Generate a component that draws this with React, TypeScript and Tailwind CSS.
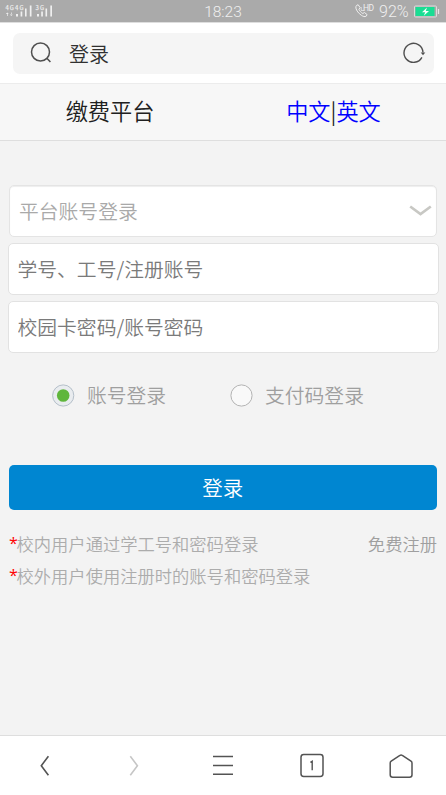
import React, { useState } from 'react';

type LoginMode = 'account' | 'paycode';

const modes: { id: LoginMode; label: string; width: string }[] = [
  { id: 'account', label: '账号登录', width: 'w-[178px]' },
  { id: 'paycode', label: '支付码登录', width: 'w-[160px]' },
];

const hints = ['校内用户通过学工号和密码登录', '校外用户使用注册时的账号和密码登录'];

function StatusBar() {
  return (
    <div className="grid h-[22px] shrink-0 grid-cols-[1fr_auto_1fr] items-center bg-[#aaaaaa] text-[#efefef]">
      <svg className="h-[22px] w-[60px]" viewBox="0 0 60 22" fill="currentColor">
        <text x="5.5" y="10" fontSize="6" fontWeight="700" textLength="18">4G4G</text>
        <text x="35.5" y="10" fontSize="6" fontWeight="700" textLength="8.5">3G</text>
        <path d="M7.3 12.5l1.4 1.6H5.9zM7 13.5h.7V16H7zM11.3 16l1.4-1.6H9.9zM11 12.5h.7V15H11z" />
        <path d="M16 14h2v2.5h-2zM20.6 11.5h1.7v5h-1.7zM25 8.5h1.6v8H25zM29.8 5.5h1.7v11h-1.7z" />
        <path d="M37 14h2v2.5h-2zM41.2 11.5h1.7v5h-1.7zM45.5 8.5h1.6v8h-1.6zM50.3 5.5H52v11h-1.7z" />
      </svg>
      <span className="pt-[2px] font-['Roboto',sans-serif] text-[15.5px] leading-5 font-light">18:23</span>
      <div className="flex items-center justify-end pr-[6px]">
        <svg className="h-[22px] w-[25px]" viewBox="0 0 25 22" fill="none" stroke="currentColor">
          <path
            d="M2.4 5.6l1.7-.9 2.1 3-1.3 1.600c.9 1.900 2.100 3.200 3.900 4.200l1.700-1 2.600 2.100-.9 1.600c-1.500.8-3.100.3-4.800-.9C4.500 13.300 2.500 10.700 1.900 8.100 1.800 7 1.900 6.100 2.400 5.600z"
            strokeWidth="1"
          />
          <path d="M7.200 7v3.500h3" strokeWidth=".7" />
          <text x="9" y="10.800" fontSize="8.500" fontFamily="Roboto, sans-serif" fontWeight="400" fill="currentColor" stroke="none" textLength="11">HD</text>
        </svg>
        <span className="w-[32px] pt-[2px] font-['Roboto',sans-serif] text-[16px] leading-5 font-light">92%</span>
        <svg className="ml-[3px] h-[13px] w-[26px]" viewBox="0 0 26 13">
          <rect x=".5" y="1" width="22" height="11" rx="1" fill="#aaaaaa" stroke="#dcdcdc" />
          <rect x="1.500" y="2" width="19" height="9" fill="#19dd93" />
          <path d="M13 2.500L8 7.200h3.200L9.800 10.700l5.200-4.600h-3.200z" fill="#f5fffb" />
          <path d="M24.500 4v5" stroke="#e5e5e5" strokeWidth="1.200" />
        </svg>
      </div>
    </div>
  );
}

function SearchBar() {
  return (
    <div className="h-[61px] shrink-0 border-t border-[#dedede] bg-white px-[12.5px] pt-[9.5px]">
      <div className="flex h-[41.5px] items-center rounded-[7px] bg-[#f5f5f5] pr-[8px] pl-[17px] text-[#4f4f4f]">
        <svg className="h-6 w-6" viewBox="0 0 24 24" fill="none" stroke="currentColor" strokeWidth="1.500">
          <circle cx="10.500" cy="11" r="9" />
          <path d="M16.900 17.300l3.500 3.700" />
        </svg>
        <span className="ml-[15.5px] grow pt-[2px] text-[20px] leading-none text-[#303030]">登录</span>
        <svg className="h-6 w-6" viewBox="0 0 24 24" fill="none" stroke="currentColor" strokeWidth="1.400">
          <path d="M19.900 16.300A9.500 9.500 0 1 1 21 11.500" />
          <path d="M18.700 11.500h4.600L21 14.300z" fill="currentColor" stroke="none" />
        </svg>
      </div>
    </div>
  );
}

function TitleBar() {
  return (
    <div className="flex h-[58px] shrink-0 items-center border-t border-b border-t-[#ececec] border-b-[#dedede] bg-[#f7f7f7] pb-[4px] text-[22.2px] leading-none font-light text-[#202020]">
      <h1 className="w-[220px] text-center font-light">缴费平台</h1>
      <div className="w-[226px] pl-px text-center">
        <a className="text-[#0000ff]">中文</a>|<a className="text-[#0000ff]">英文</a>
      </div>
    </div>
  );
}

function BottomNav() {
  const icon = 'h-[30px] w-[30px]';
  return (
    <nav className="grid h-[60px] shrink-0 grid-cols-5 place-items-center border-t border-[#dedede] bg-white text-[#535353]">
      <svg className={icon} viewBox="0 0 30 30" fill="none" stroke="currentColor" strokeWidth="1.600">
        <path d="M18.400 5.200L11.300 14.700l7.100 9.500" />
      </svg>
      <svg className={`${icon} text-[#c6c6c6]`} viewBox="0 0 30 30" fill="none" stroke="currentColor" strokeWidth="1.600">
        <path d="M11.300 5.200L18.400 14.700l-7.100 9.500" />
      </svg>
      <svg className={icon} viewBox="0 0 30 30" fill="none" stroke="currentColor" strokeWidth="1.600">
        <path d="M5 5.500h20M5 14.500h20M5 23.300h20" />
      </svg>
      <svg className={icon} viewBox="0 0 30 30" fill="none" stroke="currentColor" strokeWidth="1.500">
        <rect x="4" y="3.500" width="22" height="22" rx="2.700" />
        <path d="M13.400 11.300l1.800-1v9" strokeWidth="1.400" />
      </svg>
      <svg className={icon} viewBox="0 0 30 30" fill="none" stroke="currentColor" strokeWidth="1.500" strokeLinejoin="round">
        <path d="M13.900 4.400L5.200 10.200Q4.200 10.900 4.200 12.100V23.800Q4.200 26.300 6.700 26.300H23.500Q26 26.300 26 23.800V12.100Q26 10.900 25 10.200L16.300 4.400Q15.100 3.500 13.900 4.400Z" />
      </svg>
    </nav>
  );
}

export default function App() {
  const [mode, setMode] = useState<LoginMode>('account');
  const input =
    'h-[52px] w-full rounded-[5px] border border-[#e2e2e2] bg-white px-[9px] pb-px text-[19.8px] font-[350] text-[#606060] outline-none placeholder:text-[#7a7a7a]';

  return (
    <div className="flex h-[795px] w-[446px] flex-col overflow-hidden bg-[#f3f3f3] font-['Noto_Sans_CJK_SC_DemiLight','Noto_Sans_CJK_SC',sans-serif] font-[350]">
      <StatusBar />
      <SearchBar />
      <TitleBar />

      <main className="grow pt-[44px]">
        <div className="mx-[9px] flex h-[52px] items-center justify-between rounded-[5px] border border-[#e4e4e4] bg-white pr-[4px] pl-[9px] text-[19.8px] leading-none text-[#a9a9a9] shadow-[inset_0_1px_1px_#eeeeee]">
          <span>平台账号登录</span>
          <svg className="h-[14px] w-[23px]" viewBox="0 0 23 14" fill="none" stroke="#c8c8c4" strokeWidth="2.700">
            <path d="M1.200 2.500L11.500 10l10.300-7.500" />
          </svg>
        </div>
        <div className="mx-[7.5px] mt-[6px] flex flex-col gap-[6px]">
          <input className={input} placeholder="学号、工号/注册账号" />
          <input className={input} type="password" placeholder="校园卡密码/账号密码" />
        </div>

        <div className="mt-[31px] ml-[52px] flex h-[23px]">
          {modes.map((item) => (
            <button key={item.id} className={`flex items-center ${item.width}`} onClick={() => setMode(item.id)}>
              <svg className="h-[23px] w-[23px]" viewBox="0 0 23 23">
                {mode === item.id ? (
                  <>
                    <circle cx="11.200" cy="11.500" r="10.600" fill="#e9ecef" stroke="#b4bfc9" />
                    <circle cx="11.200" cy="11.500" r="6.300" fill="#5fb63c" />
                  </>
                ) : (
                  <circle cx="11.500" cy="11.500" r="10.600" fill="#f9f9f9" stroke="#b3b3b3" />
                )}
              </svg>
              <span className="ml-[12px] pb-[2px] text-[19.8px] leading-none font-[350] text-[#9f9f9f]">{item.label}</span>
            </button>
          ))}
        </div>

        <button className="mx-[8.5px] mt-[58px] block h-[45px] w-[428.5px] rounded-[5px] bg-[#0086d1] text-[20.5px] leading-none font-light text-white">
          登录
        </button>

        <div className="mt-[18px] flex justify-between px-[9px] text-[17.3px] leading-8 text-[#acacac]">
          <div>
            {hints.map((hint) => (
              <p key={hint} className="flex h-8">
                <span className="w-[7.5px] font-['Open_Sans',sans-serif] text-[16px] leading-[30px] font-normal text-[#ff0000]">*</span>
                {hint}
              </p>
            ))}
          </div>
          <a className="text-[#9f9f9f]">免费注册</a>
        </div>
      </main>

      <BottomNav />
    </div>
  );
}
